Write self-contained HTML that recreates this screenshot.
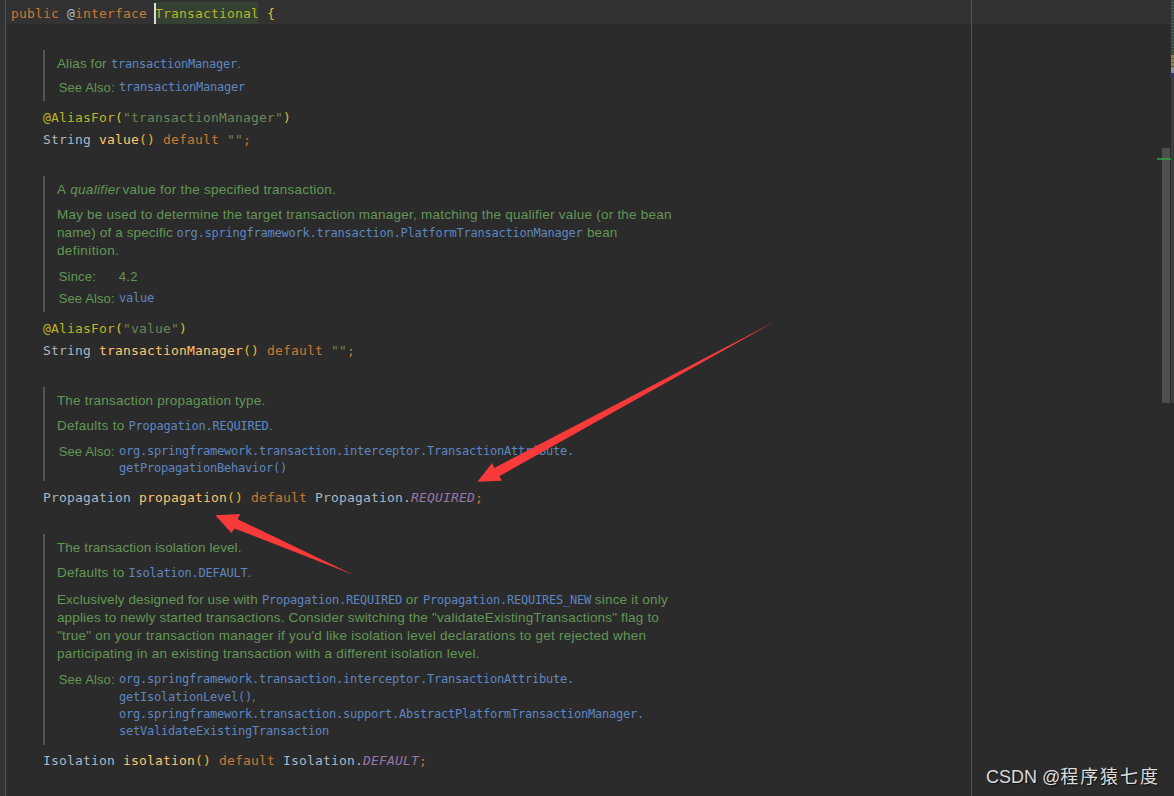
<!DOCTYPE html>
<html lang="zh-CN">
<head>
<meta charset="utf-8">
<title>Transactional.java</title>
<style>

html,body{margin:0;padding:0;background:#2b2b2b;}
body{width:1174px;height:796px;overflow:hidden;position:relative;}
#ed{position:absolute;left:0;top:0;width:1174px;height:796px;background:#2b2b2b;overflow:hidden;}
.gutter{position:absolute;left:0;top:0;width:5px;height:796px;background:#313335;border-right:1px solid #555;}
.caretrow{position:absolute;left:6px;top:0;width:1168px;height:24px;background:#323232;}
.rmargin{position:absolute;left:971px;top:0;width:1px;height:796px;background:#555555;}
.cl{position:absolute;height:22px;line-height:22px;white-space:pre;font-family:"DejaVu Sans Mono", "Liberation Mono", monospace;font-size:13.0px;letter-spacing:0.173px;color:#a9b7c6;}
.k{color:#cc7832;} .a{color:#bbb529;} .an{color:#bbb529;}
.hl{position:absolute;left:156px;top:2px;width:102px;height:22px;background:#344134;} .b{color:#e8ba36;} .p{color:#d2c23a;}
.s{color:#6a8759;} .f{color:#ffc66d;} .t{color:#a9b7c6;} .c{color:#9876aa;font-style:italic;}
.caret{position:absolute;left:154px;top:3px;width:2px;height:21px;background:#dcdcdc;}
.bar{position:absolute;left:43px;width:2px;background:#4d5a49;}
.dl{position:absolute;left:0;top:0;}
.dl span{position:absolute;white-space:pre;line-height:20px;height:20px;}
.g,.i{font-family:"Liberation Sans", "DejaVu Sans", sans-serif;font-size:13.5px;color:#629755;}
.i{font-style:italic;}
.h{font-family:"Liberation Sans", "DejaVu Sans", sans-serif;font-size:13px;color:#629755;}
.m{font-family:"DejaVu Sans Mono", "Liberation Mono", monospace;font-size:12.0px;letter-spacing:-0.225px;color:#5e86c2;}
.wm{position:absolute;left:986px;top:765px;font-family:"Liberation Sans","Noto Sans CJK SC",sans-serif;font-size:18px;line-height:24px;color:#dcdcdc;white-space:pre;text-shadow:1px 1px 1px #111;}
.cj{letter-spacing:1.9px;}
.sb{position:absolute;left:1162px;top:148px;width:8px;height:255px;background:#4e4e4e;}
.stripe{position:absolute;left:1171px;top:0;width:3px;height:403px;background:#3c3f41;}
.gm{position:absolute;left:1157px;top:158px;width:14px;height:2px;background:#329a42;opacity:.85;}
.st1{position:absolute;left:1171px;top:0;width:3px;height:54px;background:repeating-linear-gradient(180deg,#2e4a33 0,#2e4a33 2px,#50604f 2px,#50604f 3px);}
.st2{position:absolute;left:1171px;top:55px;width:3px;height:13px;background:repeating-linear-gradient(180deg,#8a8550 0,#8a8550 3px,#5d5a3c 3px,#5d5a3c 4px);}
.st3{position:absolute;left:1171px;top:68px;width:3px;height:5px;background:#8a90b0;}
.st4{position:absolute;left:1170px;top:73px;width:4px;height:4px;background:#36365c;}
svg.arrows{position:absolute;left:0;top:0;}

</style>
</head>
<body>
<div id="ed">
<div class="caretrow"></div><div class="gutter"></div><div class="rmargin"></div><div class="hl"></div>
<div class="cl" style="left:11px;top:3px"><span class="k">public </span><span class="t">@</span><span class="k">interface </span><span class="an">Transactional</span><span class="t"> </span><span class="b">{</span></div>
<div class="cl" style="left:43px;top:107px"><span class="a">@AliasFor</span><span class="p">(</span><span class="s">"transactionManager"</span><span class="p">)</span></div>
<div class="cl" style="left:43px;top:129px"><span class="t">String </span><span class="f">value</span><span class="b">()</span><span class="k"> default </span><span class="s">""</span><span class="k">;</span></div>
<div class="cl" style="left:43px;top:318px"><span class="a">@AliasFor</span><span class="p">(</span><span class="s">"value"</span><span class="p">)</span></div>
<div class="cl" style="left:43px;top:340px"><span class="t">String </span><span class="f">transactionManager</span><span class="b">()</span><span class="k"> default </span><span class="s">""</span><span class="k">;</span></div>
<div class="cl" style="left:43px;top:487px"><span class="t">Propagation </span><span class="f">propagation</span><span class="b">()</span><span class="k"> default </span><span class="t">Propagation.</span><span class="c">REQUIRED</span><span class="k">;</span></div>
<div class="cl" style="left:43px;top:750px"><span class="t">Isolation </span><span class="f">isolation</span><span class="b">()</span><span class="k"> default </span><span class="t">Isolation.</span><span class="c">DEFAULT</span><span class="k">;</span></div>
<div class="caret"></div>
<div class="bar" style="top:50px;height:51px"></div>
<div class="bar" style="top:176px;height:136px"></div>
<div class="bar" style="top:387px;height:94px"></div>
<div class="bar" style="top:534px;height:211px"></div>
<div class="dl"><span class="g" style="left:57.0px;top:54.00px;letter-spacing:0.102px">Alias for</span> <span class="m" style="left:111.0px;top:54.00px">transactionManager</span><span class="g" style="left:236.9px;top:54.00px;letter-spacing:0.000px">.</span></div>
<div class="dl"><span class="h" style="left:58.7px;top:78.00px;letter-spacing:0.120px">See Also:</span> <span class="m" style="left:119.0px;top:77.00px">transactionManager</span></div>
<div class="dl"><span class="g" style="left:56.9px;top:180.00px;letter-spacing:0.000px">A</span> <span class="i" style="left:70.2px;top:180.00px;letter-spacing:0.327px">qualifier</span> <span class="g" style="left:122.6px;top:180.00px;letter-spacing:0.238px">value for the specified transaction.</span></div>
<div class="dl"><span class="g" style="left:56.9px;top:205.00px;letter-spacing:0.241px">May be used to determine the target transaction manager, matching the qualifier value (or the bean</span></div>
<div class="dl"><span class="g" style="left:56.9px;top:223.00px;letter-spacing:0.138px">name) of a specific</span> <span class="m" style="left:176.5px;top:223.00px">org.springframework.transaction.PlatformTransactionManager</span> <span class="g" style="left:587.1px;top:223.00px;letter-spacing:0.018px">bean</span></div>
<div class="dl"><span class="g" style="left:56.9px;top:241.00px;letter-spacing:0.420px">definition.</span></div>
<div class="dl"><span class="h" style="left:58.7px;top:267.00px;letter-spacing:0.212px">Since:</span> <span class="h" style="left:118.7px;top:267.00px;letter-spacing:0.300px">4.2</span></div>
<div class="dl"><span class="h" style="left:58.7px;top:289.00px;letter-spacing:0.120px">See Also:</span> <span class="m" style="left:119.0px;top:288.00px">value</span></div>
<div class="dl"><span class="g" style="left:56.9px;top:391.00px;letter-spacing:0.227px">The transaction propagation type.</span></div>
<div class="dl"><span class="g" style="left:56.9px;top:416.00px;letter-spacing:0.275px">Defaults to</span> <span class="m" style="left:128.6px;top:416.00px">Propagation.REQUIRED</span><span class="g" style="left:269.1px;top:416.00px;letter-spacing:0.000px">.</span></div>
<div class="dl"><span class="h" style="left:58.7px;top:442.00px;letter-spacing:0.120px">See Also:</span> <span class="m" style="left:119.0px;top:441.00px">org.springframework.transaction.interceptor.TransactionAttribute.</span></div>
<div class="dl"><span class="m" style="left:119.0px;top:458.00px">getPropagationBehavior()</span></div>
<div class="dl"><span class="g" style="left:56.9px;top:538.00px;letter-spacing:0.096px">The transaction isolation level.</span></div>
<div class="dl"><span class="g" style="left:56.9px;top:563.00px;letter-spacing:0.275px">Defaults to</span> <span class="m" style="left:128.6px;top:563.00px">Isolation.DEFAULT</span><span class="g" style="left:247.6px;top:563.00px;letter-spacing:0.000px">.</span></div>
<div class="dl"><span class="g" style="left:56.9px;top:590.00px;letter-spacing:0.084px">Exclusively designed for use with</span> <span class="m" style="left:262.0px;top:590.00px">Propagation.REQUIRED</span> <span class="g" style="left:405.7px;top:590.00px;letter-spacing:0.300px">or</span> <span class="m" style="left:423.0px;top:590.00px">Propagation.REQUIRES_NEW</span> <span class="g" style="left:594.8px;top:590.00px;letter-spacing:0.196px">since it only</span></div>
<div class="dl"><span class="g" style="left:56.9px;top:608.00px;letter-spacing:0.167px">applies to newly started transactions. Consider switching the "validateExistingTransactions" flag to</span></div>
<div class="dl"><span class="g" style="left:56.9px;top:626.00px;letter-spacing:0.246px">"true" on your transaction manager if you'd like isolation level declarations to get rejected when</span></div>
<div class="dl"><span class="g" style="left:56.9px;top:644.00px;letter-spacing:0.240px">participating in an existing transaction with a different isolation level.</span></div>
<div class="dl"><span class="h" style="left:58.7px;top:670.00px;letter-spacing:0.120px">See Also:</span> <span class="m" style="left:119.0px;top:669.00px">org.springframework.transaction.interceptor.TransactionAttribute.</span></div>
<div class="dl"><span class="m" style="left:119.0px;top:687.00px">getIsolationLevel()</span><span class="g" style="left:251.8px;top:687.00px;letter-spacing:0.000px">,</span></div>
<div class="dl"><span class="m" style="left:119.0px;top:704.00px">org.springframework.transaction.support.AbstractPlatformTransactionManager.</span></div>
<div class="dl"><span class="m" style="left:119.0px;top:721.00px">setValidateExistingTransaction</span></div>
<svg class="arrows" width="1174" height="796" viewBox="0 0 1174 796">
<polygon fill="#f93a3a" points="776,321 494.2,468 492.2,462.9 477.4,481.8 501.9,480.8 499.4,476.2"/>
<polygon fill="#f93a3a" points="353.3,574.8 237.6,519.2 240.2,514.1 215.3,515.3 231.4,533 234.5,528.4"/>
</svg>
<div class="stripe"></div><div class="sb"></div><div class="gm"></div><div class="st1"></div><div class="st2"></div><div class="st3"></div><div class="st4"></div>
<div class="wm">CSDN @<span class="cj">程序猿七度</span></div>
</div>
</body>
</html>
